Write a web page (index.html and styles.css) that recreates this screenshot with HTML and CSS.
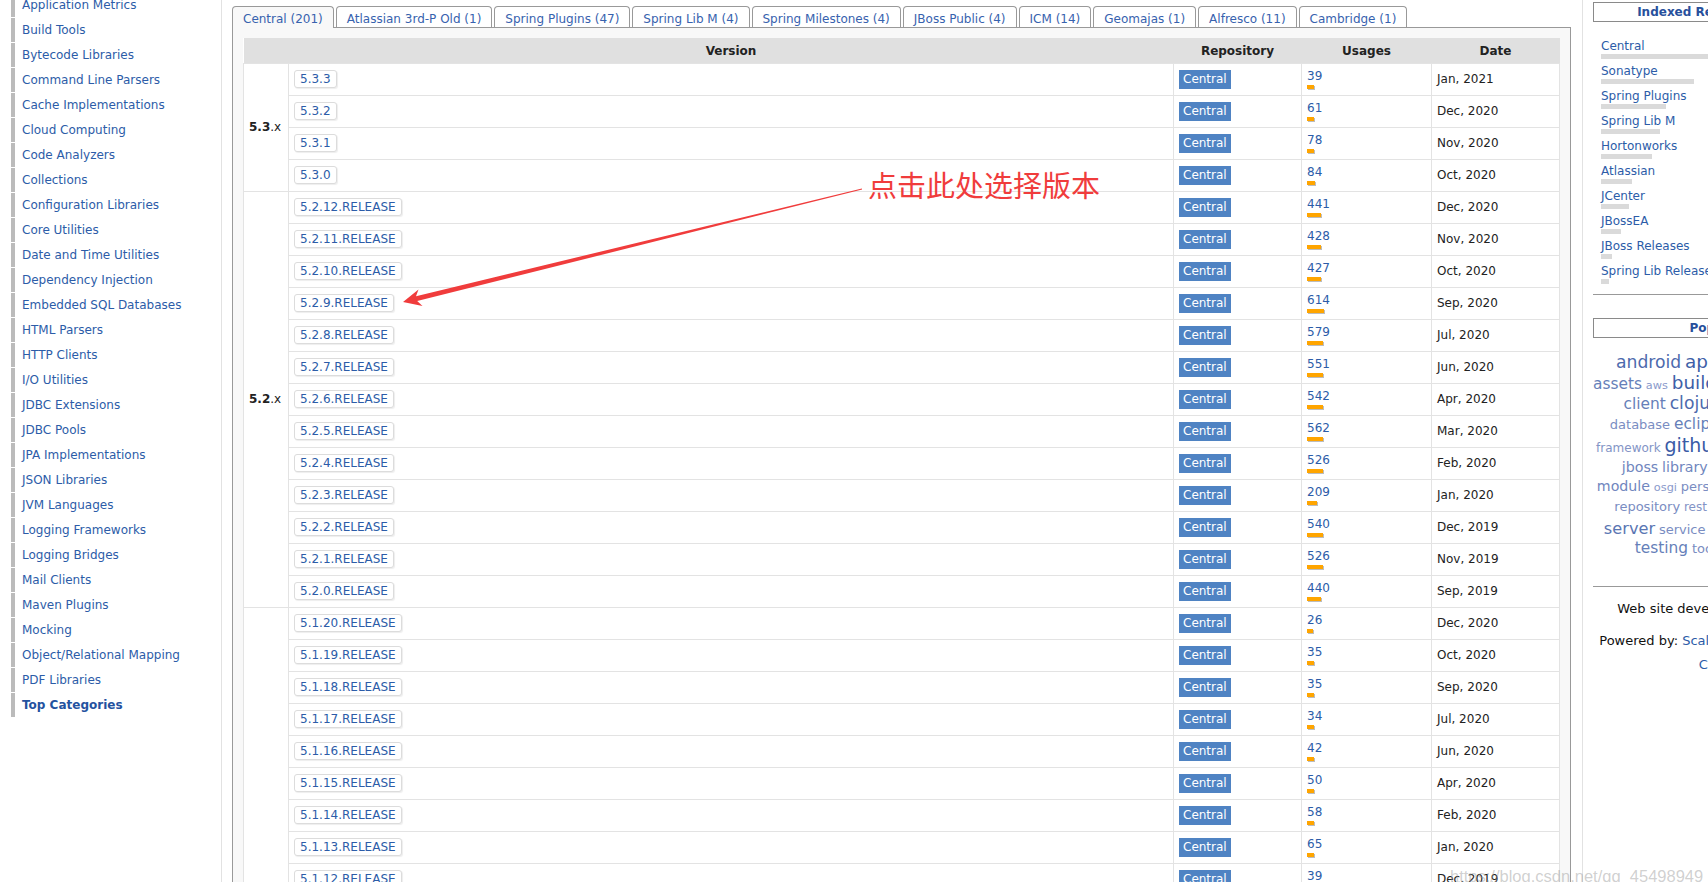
FILE: index.html
```html
<!DOCTYPE html>
<html>
<head>
<meta charset="utf-8">
<title>Spring Versions</title>
<link rel="stylesheet" href="styles.css">
</head>
<body>
<div class="page">
  <aside class="left">
    <ul class="cats">
      <li><a>Application Metrics</a></li>
      <li><a>Build Tools</a></li>
      <li><a>Bytecode Libraries</a></li>
      <li><a>Command Line Parsers</a></li>
      <li><a>Cache Implementations</a></li>
      <li><a>Cloud Computing</a></li>
      <li><a>Code Analyzers</a></li>
      <li><a>Collections</a></li>
      <li><a>Configuration Libraries</a></li>
      <li><a>Core Utilities</a></li>
      <li><a>Date and Time Utilities</a></li>
      <li><a>Dependency Injection</a></li>
      <li><a>Embedded SQL Databases</a></li>
      <li><a>HTML Parsers</a></li>
      <li><a>HTTP Clients</a></li>
      <li><a>I/O Utilities</a></li>
      <li><a>JDBC Extensions</a></li>
      <li><a>JDBC Pools</a></li>
      <li><a>JPA Implementations</a></li>
      <li><a>JSON Libraries</a></li>
      <li><a>JVM Languages</a></li>
      <li><a>Logging Frameworks</a></li>
      <li><a>Logging Bridges</a></li>
      <li><a>Mail Clients</a></li>
      <li><a>Maven Plugins</a></li>
      <li><a>Mocking</a></li>
      <li><a>Object/Relational Mapping</a></li>
      <li><a>PDF Libraries</a></li>
      <li class="top"><a>Top Categories</a></li>
    </ul>
  </aside>

  <main class="main">
    <ul class="tabs">
      <li class="tab active">Central (201)</li>
      <li class="tab">Atlassian 3rd-P Old (1)</li>
      <li class="tab">Spring Plugins (47)</li>
      <li class="tab">Spring Lib M (4)</li>
      <li class="tab">Spring Milestones (4)</li>
      <li class="tab">JBoss Public (4)</li>
      <li class="tab">ICM (14)</li>
      <li class="tab">Geomajas (1)</li>
      <li class="tab">Alfresco (11)</li>
      <li class="tab">Cambridge (1)</li>
    </ul>
    <div class="panel">
      <table class="grid">
        <colgroup>
          <col class="c-grp"><col class="c-ver"><col class="c-repo"><col class="c-use"><col class="c-date">
        </colgroup>
        <thead>
          <tr><th></th><th>Version</th><th>Repository</th><th>Usages</th><th>Date</th></tr>
        </thead>
        <tbody>
          <tr><td class="grp" rowspan="4"><b>5.3</b>.x</td><td><a class="vbtn">5.3.3</a></td><td><span class="badge">Central</span></td><td><a class="num">39</a><span class="bar" style="width:7px"></span></td><td class="date">Jan, 2021</td></tr>
          <tr><td><a class="vbtn">5.3.2</a></td><td><span class="badge">Central</span></td><td><a class="num">61</a><span class="bar" style="width:7px"></span></td><td class="date">Dec, 2020</td></tr>
          <tr><td><a class="vbtn">5.3.1</a></td><td><span class="badge">Central</span></td><td><a class="num">78</a><span class="bar" style="width:7px"></span></td><td class="date">Nov, 2020</td></tr>
          <tr><td><a class="vbtn">5.3.0</a></td><td><span class="badge">Central</span></td><td><a class="num">84</a><span class="bar" style="width:8px"></span></td><td class="date">Oct, 2020</td></tr>

          <tr><td class="grp" rowspan="13"><b>5.2</b>.x</td><td><a class="vbtn">5.2.12.RELEASE</a></td><td><span class="badge">Central</span></td><td><a class="num">441</a><span class="bar" style="width:14px"></span></td><td class="date">Dec, 2020</td></tr>
          <tr><td><a class="vbtn">5.2.11.RELEASE</a></td><td><span class="badge">Central</span></td><td><a class="num">428</a><span class="bar" style="width:14px"></span></td><td class="date">Nov, 2020</td></tr>
          <tr><td><a class="vbtn">5.2.10.RELEASE</a></td><td><span class="badge">Central</span></td><td><a class="num">427</a><span class="bar" style="width:14px"></span></td><td class="date">Oct, 2020</td></tr>
          <tr><td><a class="vbtn">5.2.9.RELEASE</a></td><td><span class="badge">Central</span></td><td><a class="num">614</a><span class="bar" style="width:17px"></span></td><td class="date">Sep, 2020</td></tr>
          <tr><td><a class="vbtn">5.2.8.RELEASE</a></td><td><span class="badge">Central</span></td><td><a class="num">579</a><span class="bar" style="width:16px"></span></td><td class="date">Jul, 2020</td></tr>
          <tr><td><a class="vbtn">5.2.7.RELEASE</a></td><td><span class="badge">Central</span></td><td><a class="num">551</a><span class="bar" style="width:16px"></span></td><td class="date">Jun, 2020</td></tr>
          <tr><td><a class="vbtn">5.2.6.RELEASE</a></td><td><span class="badge">Central</span></td><td><a class="num">542</a><span class="bar" style="width:16px"></span></td><td class="date">Apr, 2020</td></tr>
          <tr><td><a class="vbtn">5.2.5.RELEASE</a></td><td><span class="badge">Central</span></td><td><a class="num">562</a><span class="bar" style="width:16px"></span></td><td class="date">Mar, 2020</td></tr>
          <tr><td><a class="vbtn">5.2.4.RELEASE</a></td><td><span class="badge">Central</span></td><td><a class="num">526</a><span class="bar" style="width:16px"></span></td><td class="date">Feb, 2020</td></tr>
          <tr><td><a class="vbtn">5.2.3.RELEASE</a></td><td><span class="badge">Central</span></td><td><a class="num">209</a><span class="bar" style="width:10px"></span></td><td class="date">Jan, 2020</td></tr>
          <tr><td><a class="vbtn">5.2.2.RELEASE</a></td><td><span class="badge">Central</span></td><td><a class="num">540</a><span class="bar" style="width:16px"></span></td><td class="date">Dec, 2019</td></tr>
          <tr><td><a class="vbtn">5.2.1.RELEASE</a></td><td><span class="badge">Central</span></td><td><a class="num">526</a><span class="bar" style="width:16px"></span></td><td class="date">Nov, 2019</td></tr>
          <tr><td><a class="vbtn">5.2.0.RELEASE</a></td><td><span class="badge">Central</span></td><td><a class="num">440</a><span class="bar" style="width:14px"></span></td><td class="date">Sep, 2019</td></tr>

          <tr><td class="grp" rowspan="21"><b>5.1</b>.x</td><td><a class="vbtn">5.1.20.RELEASE</a></td><td><span class="badge">Central</span></td><td><a class="num">26</a><span class="bar" style="width:6px"></span></td><td class="date">Dec, 2020</td></tr>
          <tr><td><a class="vbtn">5.1.19.RELEASE</a></td><td><span class="badge">Central</span></td><td><a class="num">35</a><span class="bar" style="width:7px"></span></td><td class="date">Oct, 2020</td></tr>
          <tr><td><a class="vbtn">5.1.18.RELEASE</a></td><td><span class="badge">Central</span></td><td><a class="num">35</a><span class="bar" style="width:7px"></span></td><td class="date">Sep, 2020</td></tr>
          <tr><td><a class="vbtn">5.1.17.RELEASE</a></td><td><span class="badge">Central</span></td><td><a class="num">34</a><span class="bar" style="width:7px"></span></td><td class="date">Jul, 2020</td></tr>
          <tr><td><a class="vbtn">5.1.16.RELEASE</a></td><td><span class="badge">Central</span></td><td><a class="num">42</a><span class="bar" style="width:7px"></span></td><td class="date">Jun, 2020</td></tr>
          <tr><td><a class="vbtn">5.1.15.RELEASE</a></td><td><span class="badge">Central</span></td><td><a class="num">50</a><span class="bar" style="width:7px"></span></td><td class="date">Apr, 2020</td></tr>
          <tr><td><a class="vbtn">5.1.14.RELEASE</a></td><td><span class="badge">Central</span></td><td><a class="num">58</a><span class="bar" style="width:7px"></span></td><td class="date">Feb, 2020</td></tr>
          <tr><td><a class="vbtn">5.1.13.RELEASE</a></td><td><span class="badge">Central</span></td><td><a class="num">65</a><span class="bar" style="width:7px"></span></td><td class="date">Jan, 2020</td></tr>
          <tr><td><a class="vbtn">5.1.12.RELEASE</a></td><td><span class="badge">Central</span></td><td><a class="num">39</a><span class="bar" style="width:7px"></span></td><td class="date">Dec, 2019</td></tr>
          <tr><td><a class="vbtn">5.1.11.RELEASE</a></td><td><span class="badge">Central</span></td><td><a class="num">71</a><span class="bar" style="width:7px"></span></td><td class="date">Nov, 2019</td></tr>
          <tr><td><a class="vbtn">5.1.10.RELEASE</a></td><td><span class="badge">Central</span></td><td><a class="num">91</a><span class="bar" style="width:8px"></span></td><td class="date">Oct, 2019</td></tr>
          <tr><td><a class="vbtn">5.1.9.RELEASE</a></td><td><span class="badge">Central</span></td><td><a class="num">240</a><span class="bar" style="width:10px"></span></td><td class="date">Aug, 2019</td></tr>
          <tr><td><a class="vbtn">5.1.8.RELEASE</a></td><td><span class="badge">Central</span></td><td><a class="num">265</a><span class="bar" style="width:11px"></span></td><td class="date">Jun, 2019</td></tr>
          <tr><td><a class="vbtn">5.1.7.RELEASE</a></td><td><span class="badge">Central</span></td><td><a class="num">215</a><span class="bar" style="width:10px"></span></td><td class="date">May, 2019</td></tr>
          <tr><td><a class="vbtn">5.1.6.RELEASE</a></td><td><span class="badge">Central</span></td><td><a class="num">226</a><span class="bar" style="width:10px"></span></td><td class="date">Mar, 2019</td></tr>
          <tr><td><a class="vbtn">5.1.5.RELEASE</a></td><td><span class="badge">Central</span></td><td><a class="num">307</a><span class="bar" style="width:12px"></span></td><td class="date">Feb, 2019</td></tr>
          <tr><td><a class="vbtn">5.1.4.RELEASE</a></td><td><span class="badge">Central</span></td><td><a class="num">311</a><span class="bar" style="width:12px"></span></td><td class="date">Jan, 2019</td></tr>
          <tr><td><a class="vbtn">5.1.3.RELEASE</a></td><td><span class="badge">Central</span></td><td><a class="num">231</a><span class="bar" style="width:10px"></span></td><td class="date">Nov, 2018</td></tr>
          <tr><td><a class="vbtn">5.1.2.RELEASE</a></td><td><span class="badge">Central</span></td><td><a class="num">270</a><span class="bar" style="width:11px"></span></td><td class="date">Oct, 2018</td></tr>
          <tr><td><a class="vbtn">5.1.1.RELEASE</a></td><td><span class="badge">Central</span></td><td><a class="num">207</a><span class="bar" style="width:10px"></span></td><td class="date">Oct, 2018</td></tr>
          <tr><td><a class="vbtn">5.1.0.RELEASE</a></td><td><span class="badge">Central</span></td><td><a class="num">286</a><span class="bar" style="width:11px"></span></td><td class="date">Sep, 2018</td></tr>
        </tbody>
      </table>
    </div>
  </main>

  <aside class="right">
    <h3 class="rbox">Indexed Repositories (1282)</h3>
    <ul class="repos">
      <li><a>Central</a><span class="rbar" style="width:270px"></span></li>
      <li><a>Sonatype</a><span class="rbar" style="width:93px"></span></li>
      <li><a>Spring Plugins</a><span class="rbar" style="width:65px"></span></li>
      <li><a>Spring Lib M</a><span class="rbar" style="width:59px"></span></li>
      <li><a>Hortonworks</a><span class="rbar" style="width:51px"></span></li>
      <li><a>Atlassian</a><span class="rbar" style="width:31px"></span></li>
      <li><a>JCenter</a><span class="rbar" style="width:28px"></span></li>
      <li><a>JBossEA</a><span class="rbar" style="width:20px"></span></li>
      <li><a>JBoss Releases</a><span class="rbar" style="width:11px"></span></li>
      <li><a>Spring Lib Release</a><span class="rbar" style="width:8px"></span></li>
    </ul>
    <h3 class="rbox tags-title">Popular Tags</h3>
    <div class="cloud">
      <div class="tline"><a class="s17">android</a> <a class="s18">apache</a> <a class="s12">api</a> <a class="s13">application</a></div>
      <div class="tline"><a class="s15">assets</a> <a class="s11">aws</a> <a class="s18">build</a> <a class="s13">build-system</a> <a class="s15">bundle</a> <a class="s13">cache</a></div>
      <div class="tline"><a class="s15">client</a> <a class="s17">clojure</a> <a class="s13">cloud</a> <a class="s14">config</a> <a class="s11">cran</a></div>
      <div class="tline"><a class="s13">database</a> <a class="s15">eclipse</a> <a class="s12">example</a> <a class="s14">extension</a></div>
      <div class="tline"><a class="s12">framework</a> <a class="s19">github</a> <a class="s14">gradle</a> <a class="s13">groovy</a> <a class="s13">http</a> <a class="s14">io</a></div>
      <div class="tline"><a class="s14">jboss</a> <a class="s14">library</a> <a class="s17">logging</a> <a class="s19">maven</a></div>
      <div class="tline"><a class="s14">module</a> <a class="s11">osgi</a> <a class="s13">persistence</a> <a class="s15">plugin</a> <a class="s14">protocol</a></div>
      <div class="tline"><a class="s13">repository</a> <a class="s12">rest</a> <a class="s12">rlang</a> <a class="s13">sdk</a> <a class="s12">scala</a> <a class="s11">security</a></div>
      <div class="tline"><a class="s16">server</a> <a class="s13">service</a> <a class="s17">spring</a> <a class="s14">sql</a> <a class="s15">starter</a> <a class="s12">ssl</a></div>
      <div class="tline"><a class="s15">testing</a> <a class="s13">tools</a> <a class="s12">war</a> <a class="s13">web</a> <a class="s12">webapp</a></div>
    </div>
    <div class="foot">
      <p>Web site developed by <a>@frodriguez</a></p>
      <p>Powered by: <a>Scala</a>, <a>Play</a>, <a>Spark</a>, <a>Akka</a> and <a>Cassandra</a></p>
    </div>
  </aside>
</div>

<div class="annot">
  <svg class="arrow" width="1708" height="882" viewBox="0 0 1708 882" xmlns="http://www.w3.org/2000/svg">
    <polygon points="403,302 418.5,289.5 416,296.2 861.9,188.5 862.1,189.5 417.2,301.1 422.5,306" fill="#f03c3c"/>
  </svg>
  <div class="note">点击此处选择版本</div>
  <div class="wm">https://blog.csdn.net/qq_45498949</div>
</div>
</body>
</html>
```

FILE: styles.css
```css
* { box-sizing: border-box; }

html, body {
  margin: 0;
  padding: 0;
  height: 882px;
  overflow: hidden;
  background: #fff;
}

body {
  position: relative;
  width: 1708px;
  font-family: "DejaVu Sans", Verdana, sans-serif;
  font-size: 12px;
  color: #222;
}

a { color: #2c5ca8; text-decoration: none; }

.page {
  display: flex;
  height: 882px;
}

/* ---------- left column ---------- */
.left {
  flex: none;
  width: 222px;
  border-right: 1px solid #e2e2e2;
}

.cats {
  list-style: none;
  margin: -7px 0 0 11px;
  padding: 0;
}

.cats li {
  height: 24px;
  margin-bottom: 1px;
  padding-left: 7px;
  border-left: 4px solid #bbb;
  line-height: 24px;
  white-space: nowrap;
}

.cats li.top a { font-weight: bold; color: #24529f; }

/* ---------- main column ---------- */
.main {
  flex: none;
  width: 1339px;
  margin-left: 10px;
}

.tabs {
  display: flex;
  gap: 2px;
  list-style: none;
  margin: 6px 0 0;
  padding: 0;
}

.tab {
  padding: 5px 10px 0;
  border: 1px solid #999;
  border-bottom: none;
  border-radius: 4px 4px 0 0;
  background: #fff;
  color: #3762ae;
  line-height: 15px;
  white-space: nowrap;
}

.tab.active {
  position: relative;
  z-index: 1;
  margin-bottom: -1px;
  padding-bottom: 1px;
  background: #f8f8f8;
}

.panel {
  padding: 10px;
  border: 1px solid #999;
  background: #f8f8f8;
}

.grid {
  width: 1316px;
  border-collapse: collapse;
  table-layout: fixed;
  background: #fff;
}

.c-grp { width: 45px; }
.c-ver { width: 885px; }
.c-repo { width: 128px; }
.c-use { width: 130px; }
.c-date { width: 128px; }

.grid th {
  height: 25px;
  padding: 1px 0 0;
  border: none;
  background: #e0e0e0;
  font-weight: bold;
  text-align: center;
  color: #222;
}

.grid td {
  height: 32px;
  padding: 0 5px;
  border: 1px solid #e3e3e3;
  vertical-align: middle;
  white-space: nowrap;
}

.grid td.grp { color: #222; }
.grid td.grp b { font-weight: bold; }

.vbtn {
  display: inline-block;
  padding: 0 5px;
  border: 1px solid #dcdcdc;
  border-radius: 3px;
  line-height: 16px;
  box-shadow: 1px 1px 1px rgba(0, 0, 0, 0.07);
  background: #fff;
}

.badge {
  display: inline-block;
  padding: 0 4px;
  background: #4f83c3;
  color: #fff;
  line-height: 19px;
}

.num {
  display: block;
  line-height: 13px;
}

.bar {
  display: block;
  height: 4px;
  margin-top: 2px;
  background: #ffa500;
  box-shadow: 1px 1px 0 #bdbdbd;
}

.date { color: #222; }

/* ---------- right column ---------- */
.right {
  flex: none;
  width: 291px;
  margin-left: 11px;
  padding: 2px 0 0 10px;
  border-left: 1px solid #e2e2e2;
}

.rbox {
  margin: 0;
  border: 1px solid #8a8a8a;
  font-size: 12px;
  font-weight: bold;
  line-height: 18px;
  text-align: center;
  color: #27509c;
  white-space: nowrap;
}

.repos {
  list-style: none;
  margin: 0;
  padding: 17px 0 5px 8px;
  border-bottom: 1px solid #999;
}

.repos li {
  height: 25px;
  white-space: nowrap;
}

.repos a {
  display: block;
  line-height: 14px;
}

.rbar {
  display: block;
  height: 5px;
  margin-top: 1px;
  background: #dadada;
}

.tags-title { margin-top: 23px; }

.cloud {
  padding-top: 14px;
  text-align: center;
}

.tline {
  height: 20.7px;
  line-height: 20px;
  white-space: nowrap;
}

.s11 { font-size: 11.3px; color: #8a9acb; }
.s12 { font-size: 12px; color: #8394c6; }
.s13 { font-size: 13px; color: #7a8dc2; }
.s14 { font-size: 14.2px; color: #7086be; }
.s15 { font-size: 15.4px; color: #667fb9; }
.s16 { font-size: 16.2px; color: #5a76b3; }
.s17 { font-size: 17.2px; color: #4d6aad; }
.s18 { font-size: 18.4px; color: #3f5fa8; }
.s19 { font-size: 19px; color: #3a5ba6; }

.foot {
  margin-top: 27px;
  padding-top: 10px;
  border-top: 1px solid #999;
  font-size: 13px;
  line-height: 24px;
  text-align: center;
  color: #111;
}

.foot p { margin: 0 0 8px; }

/* ---------- annotation overlay ---------- */
.annot {
  position: absolute;
  left: 0;
  top: 0;
  width: 1708px;
  height: 882px;
  pointer-events: none;
}

.arrow {
  position: absolute;
  left: 0;
  top: 0;
}

.note {
  position: absolute;
  left: 868px;
  top: 170px;
  font-family: "Noto Sans CJK SC", sans-serif;
  font-size: 29px;
  line-height: 29px;
  color: #f03c3c;
  white-space: nowrap;
}

.wm {
  position: absolute;
  left: 1450px;
  top: 867px;
  font-family: "Liberation Sans", Arial, sans-serif;
  font-size: 16.5px;
  color: rgba(150, 150, 150, 0.45);
  white-space: nowrap;
}
```
